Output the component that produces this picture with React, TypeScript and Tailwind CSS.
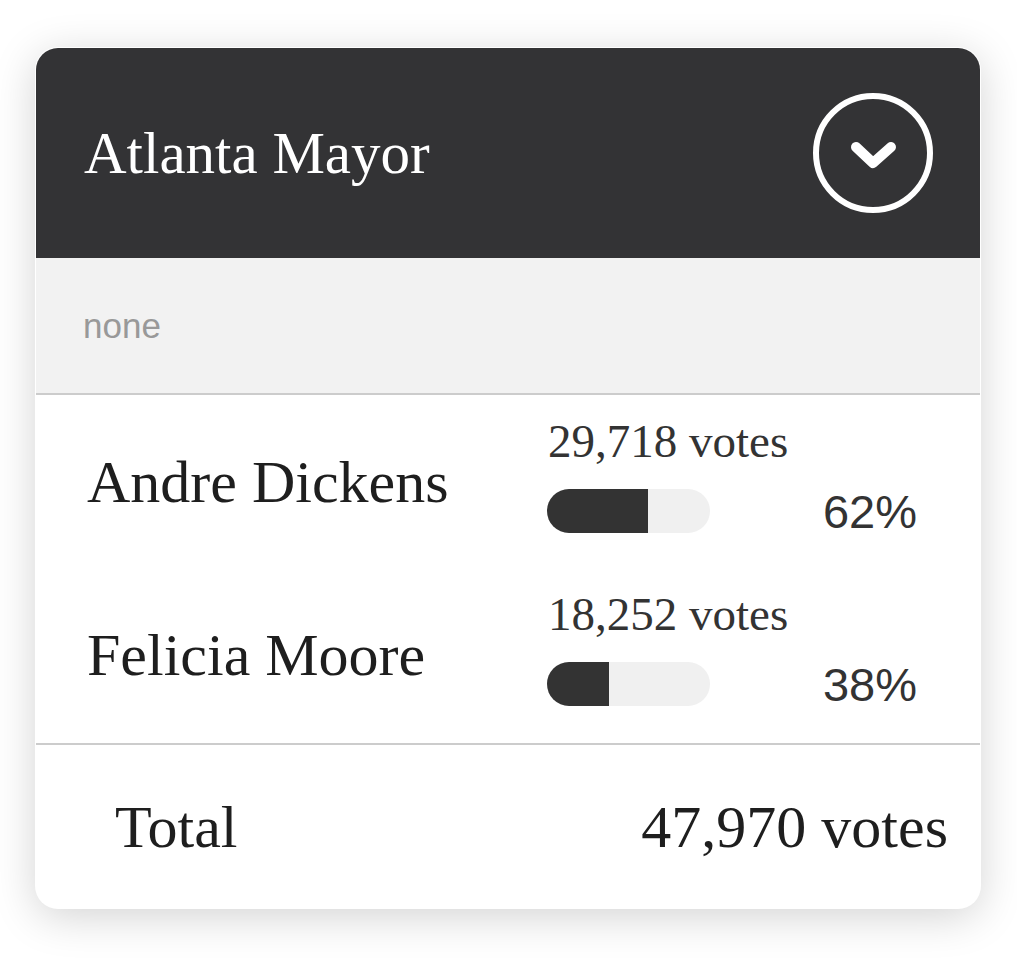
const serif = "font-['Liberation_Serif','Times_New_Roman',serif]";
const sans = "font-['Liberation_Sans',Arial,sans-serif]";

const candidates = [
  { name: "Andre Dickens", votes: "29,718", pct: 62 },
  { name: "Felicia Moore", votes: "18,252", pct: 38 },
];

function ChevronCircle() {
  return (
    <svg width="120" height="120" viewBox="0 0 120 120" fill="none">
      <circle cx="60" cy="60" r="57" stroke="white" strokeWidth="6" />
      <polyline
        points="43,54 60,70 78,54"
        stroke="white"
        strokeWidth="10"
        strokeLinecap="round"
        strokeLinejoin="round"
      />
    </svg>
  );
}

export default function App() {
  return (
    <div className="min-h-screen bg-white pt-[48px] pl-[36px]">
      <div className="w-[944px] rounded-[22px] bg-white ring-1 ring-white shadow-[0_8px_44px_rgba(0,0,0,0.18)]">
        {/* header */}
        <div className="h-[210px] flex items-center justify-between pl-12 pr-[47px] bg-[#333335] rounded-t-[22px]">
          <h1 className={`${serif} text-[59px] leading-none text-white`}>Atlanta Mayor</h1>
          <ChevronCircle />
        </div>

        {/* note */}
        <div className="h-[137px] flex items-center pl-[47px] bg-[#f2f2f2] border-b-2 border-[#cccccc]">
          <span className={`${sans} text-[35px] leading-none text-[#999999]`}>none</span>
        </div>

        {/* candidates */}
        <div className="flex flex-col gap-[58px] pt-[23px] pb-[37px]">
          {candidates.map((c) => (
            <div key={c.name} className="flex items-center">
              <div className={`${serif} w-[512px] pl-[51px] pt-[13px] text-[60px] leading-none text-[#1e1e1e]`}>
                {c.name}
              </div>
              <div className="flex-1 flex flex-col">
                <div className={`${serif} text-[47px] leading-none text-[#333333]`}>{c.votes} votes</div>
                <div className="mt-[24px] h-[44px] flex items-center">
                  <div className="h-[44px] w-[163px] -ml-px rounded-full bg-[#f0f0f0] overflow-hidden">
                    <div className="h-full bg-[#333333]" style={{ width: `${c.pct}%` }} />
                  </div>
                  <span className={`${sans} ml-auto pr-[63px] text-[47px] leading-none text-[#333333]`}>
                    {c.pct}%
                  </span>
                </div>
              </div>
            </div>
          ))}
        </div>

        {/* total */}
        <div className={`${serif} h-[165px] flex items-center justify-between pl-[79px] pr-[32px] border-t-2 border-[#cccccc] text-[60px] leading-none text-[#1e1e1e]`}>
          <span>Total</span>
          <span>47,970 votes</span>
        </div>
      </div>
    </div>
  );
}
